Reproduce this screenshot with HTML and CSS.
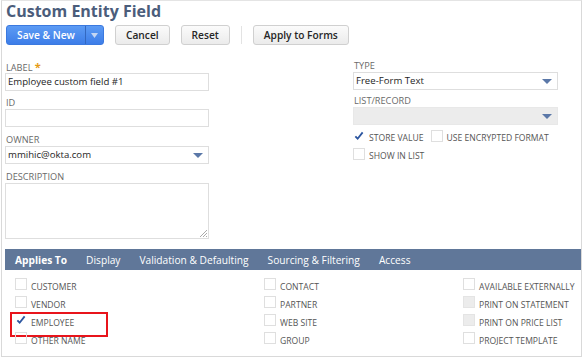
FILE: index.html
```html
<!DOCTYPE html>
<html>
<head>
<meta charset="utf-8">
<link rel="stylesheet" href="styles.css">
</head>
<body>
<div class="frame">
  <h1 class="title">Custom Entity Field</h1>
  <div class="toolbar">
    <div class="btn-split">
      <span class="btn-main">Save &amp; New</span>
      <span class="btn-drop"><svg width="7" height="5" viewBox="0 0 7 5"><path d="M0 0h7L3.5 5z" fill="#c5d6f2"/></svg></span>
    </div>
    <span class="btn">Cancel</span>
    <span class="btn">Reset</span>
    <span class="sep"></span>
    <span class="btn">Apply to Forms</span>
  </div>

  <div class="form">
    <div class="col col-left">
      <div class="field">
        <div class="lbl">LABEL <span class="req">*</span></div>
        <div class="input">Employee custom field #1</div>
      </div>
      <div class="field">
        <div class="lbl">ID</div>
        <div class="input"></div>
      </div>
      <div class="field">
        <div class="lbl">OWNER</div>
        <div class="input select">mmihic@okta.com<svg class="arrow" width="10" height="5" viewBox="0 0 10 5"><path d="M0 0h10L5 5z" fill="#5b78a8"/></svg></div>
      </div>
      <div class="field">
        <div class="lbl">DESCRIPTION</div>
        <div class="textarea"><svg class="grip" width="8" height="8" viewBox="0 0 8 8"><path d="M8 1L1 8M8 4L4 8M8 7L7 8" stroke="#aaa" stroke-width="1"/></svg></div>
      </div>
    </div>
    <div class="col col-right">
      <div class="field">
        <div class="lbl">TYPE</div>
        <div class="input select">Free-Form Text<svg class="arrow" width="10" height="5" viewBox="0 0 10 5"><path d="M0 0h10L5 5z" fill="#5b78a8"/></svg></div>
      </div>
      <div class="field">
        <div class="lbl">LIST/RECORD</div>
        <div class="input select disabled"><svg class="arrow" width="10" height="5" viewBox="0 0 10 5"><path d="M0 0h10L5 5z" fill="#5b78a8"/></svg></div>
      </div>
      <div class="checks">
        <div class="checks-row">
          <label class="chk"><span class="box checked"><svg width="11" height="10" viewBox="0 0 11 10"><path d="M1.5 5.5L4 8L9.5 1" fill="none" stroke="#2c56a0" stroke-width="2"/></svg></span>STORE VALUE</label>
          <label class="chk"><span class="box"></span>USE ENCRYPTED FORMAT</label>
        </div>
        <div class="checks-row">
          <label class="chk"><span class="box"></span>SHOW IN LIST</label>
        </div>
      </div>
    </div>
  </div>

  <div class="tabs">
    <span class="tab active">Applies To</span>
    <span class="tab">Display</span>
    <span class="tab">Validation &amp; Defaulting</span>
    <span class="tab">Sourcing &amp; Filtering</span>
    <span class="tab">Access</span>
  </div>

  <div class="applies">
    <div class="acol a1">
      <label class="chk"><span class="box"></span>CUSTOMER</label>
      <label class="chk"><span class="box"></span>VENDOR</label>
      <label class="chk highlight"><span class="box checked"><svg width="11" height="10" viewBox="0 0 11 10"><path d="M1.5 5.5L4 8L9.5 1" fill="none" stroke="#2c56a0" stroke-width="2"/></svg></span>EMPLOYEE</label>
      <label class="chk"><span class="box"></span>OTHER NAME</label>
    </div>
    <div class="acol a2">
      <label class="chk"><span class="box"></span>CONTACT</label>
      <label class="chk"><span class="box"></span>PARTNER</label>
      <label class="chk"><span class="box"></span>WEB SITE</label>
      <label class="chk"><span class="box"></span>GROUP</label>
    </div>
    <div class="acol a3">
      <label class="chk"><span class="box"></span>AVAILABLE EXTERNALLY</label>
      <label class="chk"><span class="box grey"></span>PRINT ON STATEMENT</label>
      <label class="chk"><span class="box grey"></span>PRINT ON PRICE LIST</label>
      <label class="chk"><span class="box"></span>PROJECT TEMPLATE</label>
    </div>
  </div>
</div>
</body>
</html>
```
FILE: styles.css
```css
* { box-sizing: border-box; }
html, body { margin: 0; padding: 0; background: #fff; }
body { font-family: "Open Sans", "Noto Sans", sans-serif; color: #333; }

.frame {
  margin-left: 1px;
  width: 581px;
  height: 357px;
  border: 1px solid #d9d9d9;
  border-top-color: #e4e4e4;
  overflow: hidden;
}

.title {
  margin: 0;
  padding-left: 4px;
  font-size: 16px;
  line-height: 20px;
  height: 20px;
  font-weight: 700;
  color: #4b5d7b;
  white-space: nowrap;
}

.toolbar {
  display: flex;
  align-items: center;
  margin: 4px 0 0 4px;
  height: 20px;
}
.btn-split {
  display: flex;
  height: 20px;
  border-radius: 3px;
  background: linear-gradient(#5c9bf4, #3d7de8);
  border: 1px solid #3b79df;
  color: #fff;
  font-size: 10.2px;
  font-weight: 600;
}
.btn-main {
  width: 79px;
  display: flex;
  align-items: center;
  justify-content: center;
  border-right: 1px solid #3368c0;
}
.btn-drop {
  width: 17px;
  display: flex;
  align-items: center;
  justify-content: center;
}
.btn {
  height: 20px;
  display: flex;
  align-items: center;
  padding: 0 10px;
  margin-left: 11px;
  border: 1px solid #d0d0d0;
  border-radius: 3px;
  background: linear-gradient(#fbfbfb, #ebebeb);
  font-size: 10.2px;
  font-weight: 600;
  color: #262626;
  white-space: nowrap;
}
.sep {
  width: 1px;
  height: 18px;
  background: #e3e3e3;
  margin-left: 11px;
}

.form {
  display: flex;
  align-items: flex-start;
  margin-top: 15px;
  padding-left: 3px;
}
.col-left { width: 204px; }
.col-right { margin-left: 144px; width: 205px; margin-top: -1px; }
.lbl {
  font-size: 9.2px;
  color: #6a6a6a;
  line-height: 13px;
  height: 13px;
  padding-left: 1px;
  white-space: nowrap;
}
.req { color: #e59b16; font-weight: 700; font-size: 11px; }
.input {
  height: 18px;
  border: 1px solid #dedede;
  font-size: 9.6px;
  line-height: 16px;
  padding-left: 2px;
  color: #1e1e1e;
  position: relative;
  margin-bottom: 6px;
  white-space: nowrap;
}
.col-left .field:first-child .input { margin-bottom: 5px; }
.col-right .field:first-child .input { margin-bottom: 4px; }
.col-right .field:nth-child(2) .input { margin-bottom: 4px; }
.input.disabled { background: #ececec; border-color: #e8e8e8; }
.arrow { position: absolute; right: 5px; top: 6px; }
.textarea {
  height: 56px;
  border: 1px solid #dedede;
  position: relative;
}
.grip { position: absolute; right: 1px; bottom: 1px; }

.checks-row { display: flex; height: 18px; }
.checks-row .chk { margin-right: 7px; }

.chk {
  display: flex;
  align-items: center;
  font-size: 8.6px;
  color: #555;
  height: 18px;
  white-space: nowrap;
}
.box {
  width: 12px;
  height: 12px;
  border: 1px solid #dfdfdf;
  margin-right: 4px;
  flex: none;
  position: relative;
  top: -2px;
  display: flex;
  align-items: center;
  justify-content: center;
}
.box.checked { border-color: transparent; }
.box.grey { background: #ececec; border-color: #e4e4e4; }

.tabs {
  margin-top: 10px;
  margin-left: 3px;
  height: 21px;
  background: #607799;
  display: flex;
  align-items: center;
  padding-left: 10px;
}
.tab {
  color: #fff;
  font-size: 10.2px;
  margin-right: 19px;
  position: relative;
  white-space: nowrap;
}
.tab.active { font-weight: 700; }
.tab.active::after {
  content: "";
  position: absolute;
  left: 22px;
  bottom: -6px;
  border-left: 4px solid transparent;
  border-right: 4px solid transparent;
  border-bottom: 4px solid #fff;
}

.applies {
  display: flex;
  padding: 8px 0 0 13px;
}
.acol { display: flex; flex-direction: column; }
.a1 { width: 249px; }
.a2 { width: 199px; }
.applies .chk { position: relative; }
.applies .box { top: -3px; }
.highlight::before {
  content: "";
  position: absolute;
  left: -5px;
  top: -2px;
  width: 94px;
  height: 21px;
  border: 2px solid #e8141b;
}
```
